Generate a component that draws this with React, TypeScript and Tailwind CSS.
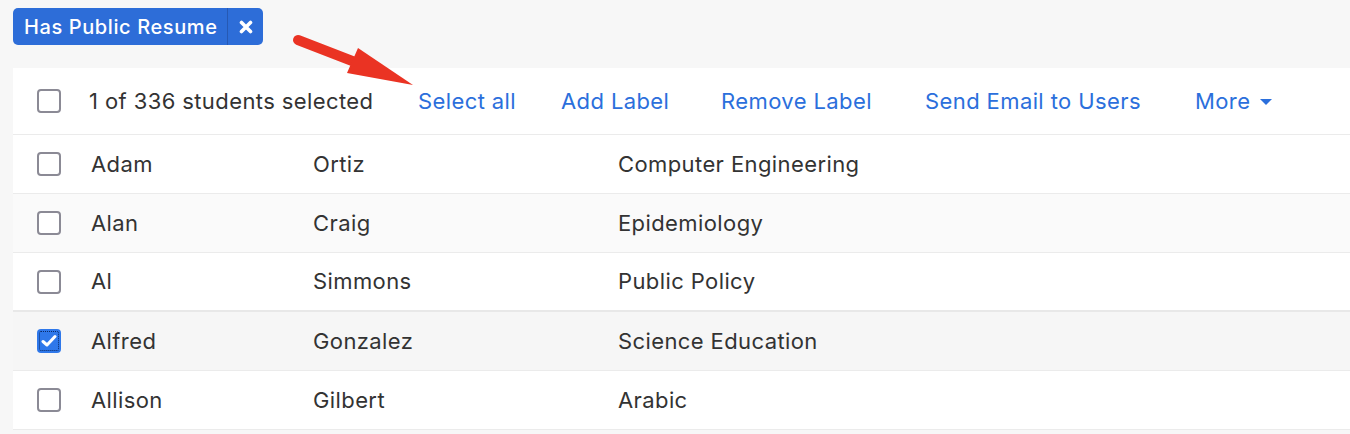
import React from "react";

const rows = [
  { first: "Adam", last: "Ortiz", major: "Computer Engineering", checked: false, bg: "bg-white" },
  { first: "Alan", last: "Craig", major: "Epidemiology", checked: false, bg: "bg-[#fafafa]" },
  { first: "Al", last: "Simmons", major: "Public Policy", checked: false, bg: "bg-white" },
  { first: "Alfred", last: "Gonzalez", major: "Science Education", checked: true, bg: "bg-[#f6f6f6]" },
  { first: "Allison", last: "Gilbert", major: "Arabic", checked: false, bg: "bg-white" },
];

function Box({ checked }: { checked?: boolean }) {
  if (checked) {
    return (
      <div className="relative w-6 h-6 rounded-[4px] bg-[#2f78ea] flex items-center justify-center shrink-0">
        <div className="absolute inset-[2px] border border-dotted border-[#0b2a66] rounded-[2px]" />
        <svg width="16" height="14" viewBox="0 0 16 14" className="relative">
          <path d="M2 7.5 L6 11 L14 2.5" stroke="white" strokeWidth="3" fill="none" strokeLinecap="round" strokeLinejoin="round" />
        </svg>
      </div>
    );
  }
  return <div className="w-6 h-6 rounded-[4px] border-2 border-[#8b8a95] bg-white shrink-0" />;
}

export default function App() {
  return (
    <div
      className="relative w-[1350px] h-[434px] overflow-hidden bg-[#f7f7f7] text-[#333333] tracking-[0.4px]"
      style={{ fontFamily: "Inter, 'Noto Sans', sans-serif" }}
    >
      <div className="pt-2 pl-[13px]">
        <div className="inline-flex h-[37px] rounded-[5px] bg-[#2d6dd8] text-white text-[20px] font-medium overflow-hidden tracking-[0.6px]">
          <div className="flex items-center w-[214px] pl-[11px]">Has Public Resume</div>
          <div className="w-px bg-[#2659b4]" />
          <div className="flex items-center justify-center w-[35px]">
            <svg width="14" height="14" viewBox="0 0 14 14">
              <path d="M2.5 2.5 L11.5 11.5 M11.5 2.5 L2.5 11.5" stroke="white" strokeWidth="3.6" strokeLinecap="round" />
            </svg>
          </div>
        </div>
      </div>

      <div className="mt-[23px] ml-[13px] bg-white">
        <div className="flex items-center h-[67px] border-b border-[#ebebeb] pl-6 text-[22px]">
          <Box />
          <span className="ml-[28px] w-[329px]">1 of 336 students selected</span>
          <div className="flex items-center text-[#2b6fdc]">
            <span className="w-[143px]">Select all</span>
            <span className="w-[160px]">Add Label</span>
            <span className="w-[204px]">Remove Label</span>
            <span className="w-[270px]">Send Email to Users</span>
            <span className="flex items-center">
              More
              <svg width="12" height="7" viewBox="0 0 12 7" className="ml-[10px] mt-[2px]">
                <path d="M0 0 L12 0 L6 6 Z" fill="#2b6fdc" />
              </svg>
            </span>
          </div>
        </div>
        {rows.map((r, i) => (
          <div
            key={r.first}
            className={`flex items-center h-[59px] ${r.bg} ${i === 2 ? "border-b-2 border-[#e8e8e8]" : "border-b border-[#ebebeb]"} pl-6 text-[22px]`}
          >
            <Box checked={r.checked} />
            <span className="ml-[30px] w-[222px]">{r.first}</span>
            <span className="w-[305px]">{r.last}</span>
            <span>{r.major}</span>
          </div>
        ))}
      </div>

      <svg className="absolute left-0 top-0 pointer-events-none" width="1350" height="434">
        <line x1="298" y1="40" x2="360" y2="64" stroke="#ea3323" strokeWidth="10" strokeLinecap="round" />
        <polygon points="413,85 347,73 358,48" fill="#ea3323" />
      </svg>
    </div>
  );
}
